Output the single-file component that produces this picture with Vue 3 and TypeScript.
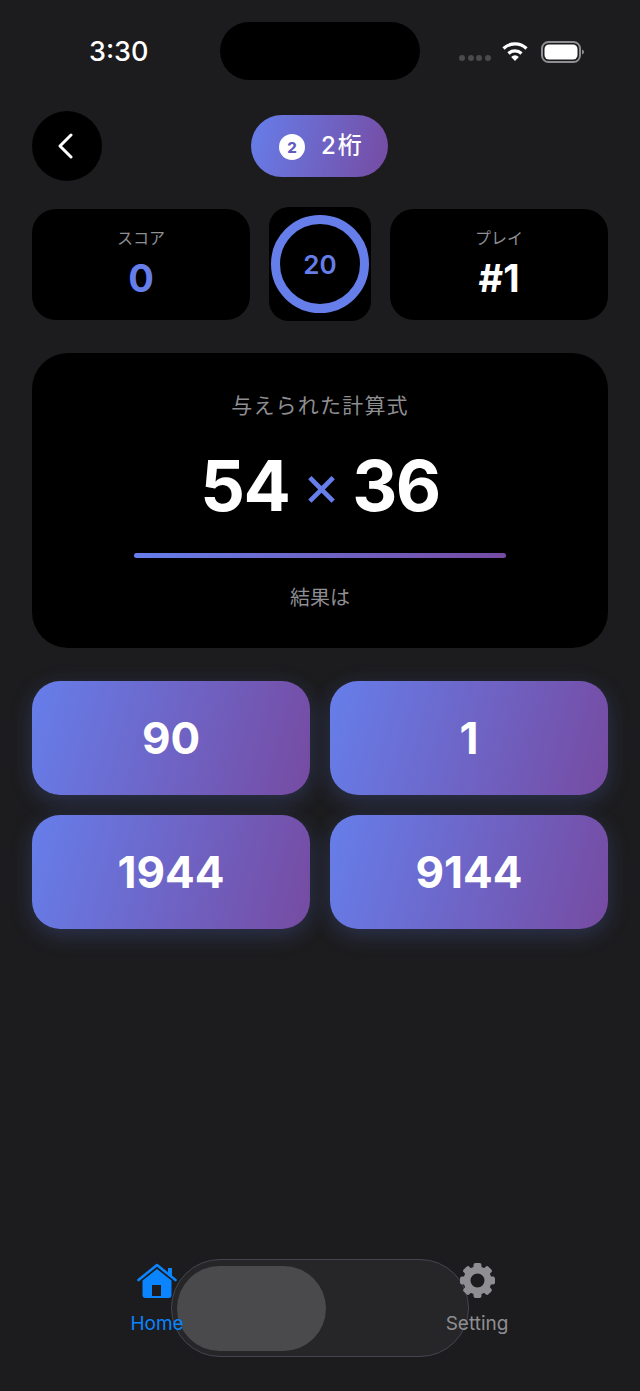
<script setup lang="ts">
const answers: string[] = ["90", "1", "1944", "9144"];
const gearTeeth: number[] = [0, 45, 90, 135, 180, 225, 270, 315];
</script>

<template>
  <div class="screen">
    <div class="status">
      <div class="time">3:30</div>
      <div class="island"></div>
      <div class="status-icons">
        <div class="dots">
          <span v-for="n in 4" :key="n"></span>
        </div>
        <svg class="wifi" width="26" height="20" viewBox="0 0 26 20">
          <path d="M1.5 7.5A16.5 16.5 0 0 1 24.5 7.5" fill="none" stroke="#fff" stroke-width="3.2" />
          <path d="M6.5 12.5A9.5 9.5 0 0 1 19.5 12.5" fill="none" stroke="#fff" stroke-width="3.2" />
          <path d="M13 20L9.2 15.9A5.4 5.4 0 0 1 16.8 15.9Z" fill="#fff" />
        </svg>
        <svg class="battery" width="43" height="22" viewBox="0 0 43 22">
          <rect x="1" y="1" width="38" height="20" rx="6.5" fill="none" stroke="#8e8e93" stroke-width="2" />
          <rect x="3.5" y="3.5" width="33" height="15" rx="4.5" fill="#fff" />
          <path d="M41 8.5c1.2.4 2 1.4 2 2.5s-.8 2.1-2 2.5z" fill="#8e8e93" />
        </svg>
      </div>
    </div>

    <main class="content">
      <div class="header">
        <button class="back">
          <svg width="18" height="26" viewBox="0 0 18 26">
            <path d="M15 2L4 13L15 24" fill="none" stroke="#fff" stroke-width="3" stroke-linecap="round" stroke-linejoin="round" />
          </svg>
        </button>
        <div class="level">
          <span class="level-badge">2</span>
          <span class="level-text">2桁</span>
        </div>
        <div class="header-spacer"></div>
      </div>

      <div class="stats">
        <div class="stat">
          <div class="stat-label">スコア</div>
          <div class="stat-value accent">0</div>
        </div>
        <div class="timer">
          <div class="ring">20</div>
        </div>
        <div class="stat">
          <div class="stat-label">プレイ</div>
          <div class="stat-value">#1</div>
        </div>
      </div>

      <div class="question">
        <div class="question-label">与えられた計算式</div>
        <div class="equation">
          <span>54</span>
          <span class="op">×</span>
          <span>36</span>
        </div>
        <div class="divider"></div>
        <div class="result-label">結果は</div>
      </div>

      <div class="answers">
        <button v-for="a in answers" :key="a" class="answer">{{ a }}</button>
      </div>
    </main>

    <nav class="tabbar">
      <div class="lens">
        <div class="lens-thumb"></div>
      </div>
      <div class="tab active">
        <svg width="40" height="35" viewBox="0 0 40 35">
          <rect x="31" y="5" width="4" height="8" fill="#0a84ff" />
          <path d="M20 6L34.5 17.5V32a3 3 0 0 1-3 3H8.5a3 3 0 0 1-3-3V17.5Z" fill="#0a84ff" />
          <path d="M1.5 17L20 2L38.5 17" fill="none" stroke="#0a84ff" stroke-width="2.6" stroke-linecap="round" stroke-linejoin="round" />
          <rect x="15" y="22" width="9" height="11" fill="#1c1c1e" />
        </svg>
        <span>Home</span>
      </div>
      <div class="tab">
        <svg width="37" height="35" viewBox="-18.5 -17.5 37 35">
          <circle r="10.5" fill="none" stroke="#8e8e93" stroke-width="7" />
          <rect
            v-for="deg in gearTeeth"
            :key="deg"
            x="-4"
            y="-17.5"
            width="8"
            height="7"
            rx="2"
            fill="#8e8e93"
            :transform="`rotate(${deg})`"
          />
        </svg>
        <span>Setting</span>
      </div>
    </nav>
  </div>
</template>

<style>
html,
body {
  margin: 0;
  background: #1c1c1e;
}
</style>

<style scoped>
.screen {
  height: 1391px;
  display: flex;
  flex-direction: column;
  background: #1c1c1e;
  font-family: Inter, "Noto Sans CJK JP", sans-serif;
  color: #fff;
  overflow: hidden;
}

.status {
  height: 111px;
  display: grid;
  grid-template-columns: 220px 200px 220px;
  align-items: start;
  padding-top: 22px;
  box-sizing: border-box;
}

.time {
  padding: 14px 0 0 89px;
  font-size: 27px;
  line-height: 32px;
  font-weight: 500;
}

.island {
  height: 58px;
  background: #000;
  border-radius: 29px;
}

.status-icons {
  display: flex;
  align-items: flex-start;
  padding: 19px 0 0 39px;
}

.dots {
  display: flex;
  gap: 2.5px;
  margin-top: 14px;
  width: 43px;
}

.dots span {
  width: 6px;
  height: 6px;
  border-radius: 50%;
  background: #4a4a4d;
}

.battery {
  margin-left: 13px;
}

.content {
  flex: 1;
  padding: 0 32px;
}

.header {
  display: flex;
  align-items: center;
  justify-content: space-between;
  height: 70px;
}

.back {
  width: 70px;
  height: 70px;
  padding: 0 5px 0 0;
  border: none;
  border-radius: 50%;
  background: #000;
  display: flex;
  align-items: center;
  justify-content: center;
}

.header-spacer {
  width: 70px;
}

.level {
  width: 137px;
  height: 62px;
  margin-left: -1px;
  box-sizing: border-box;
  display: flex;
  align-items: center;
  gap: 16px;
  padding-left: 28px;
  border-radius: 31px;
  background: linear-gradient(105deg, #667eea, #764ba2);
}

.level-badge {
  width: 26px;
  height: 26px;
  margin-top: 2px;
  border-radius: 50%;
  background: #fff;
  color: #5f5bc0;
  font-size: 15px;
  font-weight: 800;
  display: flex;
  align-items: center;
  justify-content: center;
}

.level-text {
  font-size: 24px;
  line-height: 28px;
  padding-bottom: 1px;
  font-weight: 500;
  letter-spacing: 2px;
}

.stats {
  display: grid;
  grid-template-columns: 218px 102px 218px;
  justify-content: space-between;
  align-items: center;
  margin-top: 26px;
}

.stat {
  height: 111px;
  box-sizing: border-box;
  background: #000;
  border-radius: 24px;
  text-align: center;
  padding-top: 18px;
}

.stat-label {
  font-size: 16px;
  line-height: 22px;
  color: #8e8e93;
}

.stat-value {
  font-size: 38px;
  line-height: 46px;
  font-weight: 700;
  margin-top: 6px;
}

.accent {
  color: #667eea;
}

.timer {
  height: 114px;
  background: #000;
  border-radius: 20px;
  display: flex;
  align-items: center;
  justify-content: center;
}

.ring {
  width: 98px;
  height: 98px;
  box-sizing: border-box;
  border: 9px solid #667eea;
  border-radius: 50%;
  display: flex;
  align-items: center;
  justify-content: center;
  color: #667eea;
  font-size: 26px;
  font-weight: 600;
}

.question {
  margin-top: 32px;
  height: 295px;
  box-sizing: border-box;
  padding-top: 38px;
  background: #000;
  border-radius: 36px;
  display: flex;
  flex-direction: column;
  align-items: center;
}

.question-label {
  font-size: 21px;
  line-height: 30px;
  letter-spacing: 1.2px;
  color: #8e8e93;
}

.equation {
  display: flex;
  align-items: center;
  gap: 13px;
  margin-top: 22px;
  height: 84px;
  font-size: 70px;
  font-weight: 700;
  letter-spacing: -1.5px;
}

.op {
  color: #667eea;
  font-size: 58px;
  font-weight: 400;
}

.divider {
  width: 372px;
  height: 5px;
  margin-top: 26px;
  border-radius: 3px;
  background: linear-gradient(90deg, #667eea, #764ba2);
}

.result-label {
  margin-top: 25px;
  font-size: 20px;
  line-height: 30px;
  color: #8e8e93;
}

.answers {
  display: grid;
  grid-template-columns: 1fr 1fr;
  gap: 20px;
  margin-top: 33px;
}

.answer {
  height: 114px;
  border: none;
  border-radius: 28px;
  background: linear-gradient(105deg, #667eea, #764ba2);
  box-shadow: 0 6px 22px rgba(102, 126, 234, 0.24);
  color: #fff;
  font-family: inherit;
  font-size: 44px;
  font-weight: 700;
}

.tabbar {
  position: relative;
  height: 132px;
  display: flex;
  justify-content: space-between;
  padding: 4px 83px 0 77px;
  box-sizing: border-box;
}

.lens {
  position: absolute;
  left: 171px;
  top: 0;
  width: 298px;
  height: 98px;
  box-sizing: border-box;
  padding: 6px 5px;
  border: 1px solid #44464f;
  border-radius: 49px;
  background: #262628;
}

.lens-thumb {
  width: 149px;
  height: 85px;
  border-radius: 43px;
  background: #4a4a4c;
}

.tab {
  position: relative;
  width: 160px;
  display: flex;
  flex-direction: column;
  align-items: center;
  color: #8e8e93;
  font-size: 19px;
}

.tab span {
  margin-top: 14px;
  line-height: 24px;
}

.tab.active {
  color: #0a84ff;
}
</style>
